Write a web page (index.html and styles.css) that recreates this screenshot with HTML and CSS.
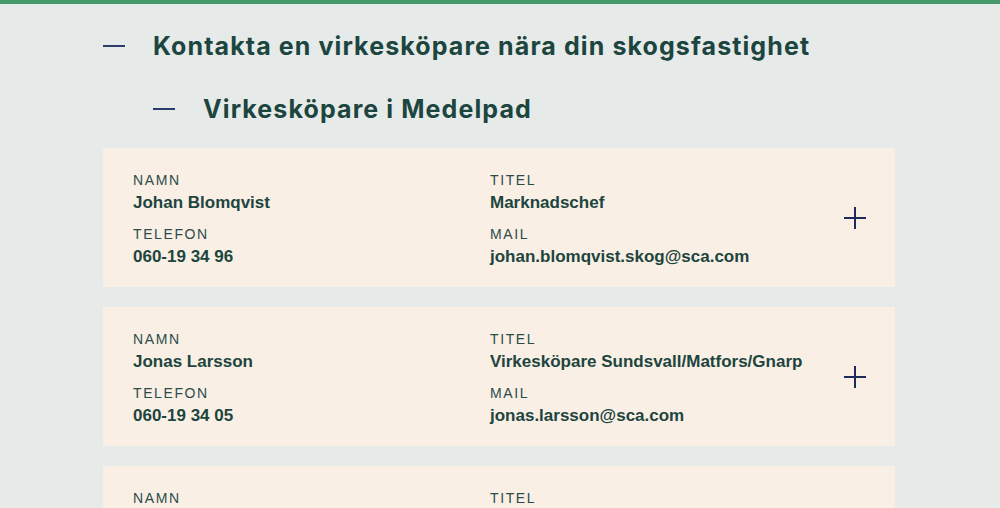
FILE: index.html
```html
<!DOCTYPE html>
<html lang="sv">
<head>
    <meta charset="UTF-8">
    <title>Kontakta en virkesköpare</title>
    <link rel="stylesheet" href="styles.css">
</head>
<body>

    <div class="topbar"></div>

    <main class="content">
        <!-- huvudrubrik -->
        <h2 class="toggle-heading">
            <span class="dash"></span>
            Kontakta en virkesköpare nära din skogsfastighet
        </h2>

        <section class="region">
            <h3 class="toggle-heading sub">
                <span class="dash"></span>
                Virkesköpare i Medelpad
            </h3>

            <div class="card">
                <div class="field">
                    <div class="label">Namn</div>
                    <div class="value">Johan Blomqvist</div>
                </div>
                <div class="field">
                    <div class="label">Titel</div>
                    <div class="value">Marknadschef</div>
                </div>
                <div class="plus"><span></span></div>
                <div class="field">
                    <div class="label">Telefon</div>
                    <div class="value">060-19 34 96</div>
                </div>
                <div class="field">
                    <div class="label">Mail</div>
                    <div class="value">johan.blomqvist.skog@sca.com</div>
                </div>
            </div>

            <div class="card">
                <div class="field">
                    <div class="label">Namn</div>
                    <div class="value">Jonas Larsson</div>
                </div>
                <div class="field">
                    <div class="label">Titel</div>
                    <div class="value">Virkesköpare Sundsvall/Matfors/Gnarp</div>
                </div>
                <div class="plus"><span></span></div>
                <div class="field">
                    <div class="label">Telefon</div>
                    <div class="value">060-19 34 05</div>
                </div>
                <div class="field">
                    <div class="label">Mail</div>
                    <div class="value">jonas.larsson@sca.com</div>
                </div>
            </div>

            <div class="card">
                <div class="field">
                    <div class="label">Namn</div>
                    <div class="value">Per Eriksson</div>
                </div>
                <div class="field">
                    <div class="label">Titel</div>
                    <div class="value">Virkesköpare</div>
                </div>
                <div class="plus"><span></span></div>
                <div class="field">
                    <div class="label">Telefon</div>
                    <div class="value">060-19 34 00</div>
                </div>
                <div class="field">
                    <div class="label">Mail</div>
                    <div class="value">per.eriksson@sca.com</div>
                </div>
            </div>
        </section>
    </main>

</body>
</html>
```

FILE: styles.css
```css
/* grund */
body {
    margin: 0;
    background-color: #e6eae8;
    font-family: "Liberation Sans", Arial, sans-serif;
    color: #1d4540;
    height: 508px;
    overflow: hidden;
}

.topbar {
    height: 4px;
    background-color: #449a6a;
}

.content {
    padding: 0 105px 0 103px;
}

/* rubriker med streck */
.toggle-heading {
    display: flex;
    align-items: center;
    gap: 28px;
    margin: 0;
    font-family: Inter, "Liberation Sans", sans-serif;
    font-size: 25px;
    font-weight: bold;
    letter-spacing: 1.1px;
    height: 36px;
    margin-top: 24px;
}

.toggle-heading .dash {
    width: 22px;
    height: 2px;
    background-color: #2b3d6b;
    flex-shrink: 0;
}

.toggle-heading.sub {
    margin: 27px 0 21px 50px;
}

/* kontaktkort */
.card {
    display: grid;
    grid-template-columns: 357px 1fr 22px;
    grid-template-rows: auto auto;
    row-gap: 10px;
    background-color: #f9efe4;
    padding: 22px 29px 19px 30px;
    margin-bottom: 20px;
}

.plus {
    grid-column: 3;
    grid-row: 1 / span 2;
    align-self: center;
    position: relative;
    width: 22px;
    height: 22px;
    margin-bottom: 2px;
}

.plus::before,
.plus span {
    content: "";
    position: absolute;
    background-color: #1c2a5c;
}

.plus::before {
    left: 0;
    right: 0;
    top: 10px;
    height: 2px;
}

.plus span {
    top: 0;
    bottom: 0;
    left: 10px;
    width: 2px;
}

.label {
    font-size: 14px;
    line-height: 20px;
    text-transform: uppercase;
    letter-spacing: 1.6px;
    color: #2c4b4a;
}

.value {
    margin-top: 2px;
    font-size: 17px;
    line-height: 22px;
    font-weight: bold;
}
```
